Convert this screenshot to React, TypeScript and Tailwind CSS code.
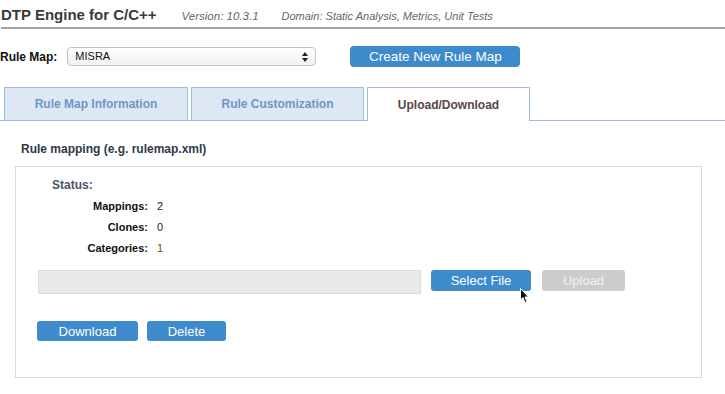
export default function App() {
  const stats = [
    { label: 'Mappings:', value: '2', color: 'text-[#222]' },
    { label: 'Clones:', value: '0', color: 'text-[#222]' },
    { label: 'Categories:', value: '1', color: 'text-[#7a4a14]' },
  ];

  return (
    <div className="w-[725px] h-[394px] bg-white font-['Liberation_Sans',Arial,sans-serif] text-[#333] overflow-hidden relative">
      {/* Header */}
      <div className="flex items-end h-[29px] pb-[5px] border-b-2 border-[#a3a3a3] ml-[1px]">
        <span className="text-[15px] font-bold text-[#3a3a3a] leading-none">DTP Engine for C/C++</span>
        <span className="ml-[25px] text-[11.5px] italic text-[#666] leading-none">Version: 10.3.1</span>
        <span className="ml-[23px] text-[11px] italic text-[#666] leading-none">Domain: Static Analysis, Metrics, Unit Tests</span>
      </div>

      {/* Rule map selector */}
      <div className="flex items-center mt-[17px] h-[21px]">
        <span className="text-[12px] font-bold text-[#111]">Rule Map:</span>
        <div className="ml-[10px] w-[249px] h-[19px] rounded-[4px] border border-[#b9c4d0] bg-gradient-to-b from-white to-[#f1f1f1] flex items-center justify-between px-[7px]">
          <span className="text-[11px] text-[#111]">MISRA</span>
          <svg width="6" height="10" viewBox="0 0 6 10">
            <path d="M0 4 L3 0 L6 4 Z" fill="#222" />
            <path d="M0 6 L3 10 L6 6 Z" fill="#222" />
          </svg>
        </div>
        <button className="ml-[34px] w-[170px] h-[21px] rounded-[4px] bg-[#3d8bcd] text-white text-[13.5px] leading-none">
          Create New Rule Map
        </button>
      </div>

      {/* Tabs */}
      <div className="flex items-end mt-[20px] pl-[4px] gap-[3px] border-b border-[#9dbde0] h-[34px]">
        <div className="w-[184px] h-[33px] bg-[#dde8f4] border border-b-0 border-[#9dbde0] flex items-center justify-center text-[12px] font-bold text-[#6e97c6]">
          Rule Map Information
        </div>
        <div className="w-[173px] h-[33px] bg-[#dde8f4] border border-b-0 border-[#9dbde0] flex items-center justify-center text-[12px] font-bold text-[#6e97c6]">
          Rule Customization
        </div>
        <div className="w-[163px] h-[34px] -mb-px bg-white border border-b-0 border-[#9dbde0] flex items-center justify-center text-[12px] font-bold text-[#5a4545]">
          Upload/Download
        </div>
      </div>

      {/* Section */}
      <div className="mt-[22px] ml-[21px] text-[12px] font-bold text-[#2f3a4a] leading-none">
        Rule mapping (e.g. rulemap.xml)
      </div>

      <div className="ml-[15px] mt-[11px] w-[687px] h-[212px] border border-[#d8d8d8]">
        <div className="ml-[36px] mt-[9px] text-[12px] font-bold text-[#4a5566]">Status:</div>
        <div className="mt-[5px] flex flex-col gap-[6px]">
          {stats.map((s) => (
            <div key={s.label} className="flex items-center h-[15px] text-[11px]">
              <span className="w-[132px] text-right font-bold text-[#111]">{s.label}</span>
              <span className={`ml-[9px] ${s.color}`}>{s.value}</span>
            </div>
          ))}
        </div>

        <div className="flex items-start mt-[14px] ml-[22px]">
          <div className="w-[383px] h-[24px] bg-[#e9e9e9] border border-[#dddddd]" />
          <button className="ml-[10px] w-[100px] h-[21px] rounded-[3px] bg-[#3d8bcd] text-white text-[13px] leading-none">
            Select File
          </button>
          <button className="ml-[11px] w-[83px] h-[21px] rounded-[3px] bg-[#cccccc] text-[#f2f2f2] text-[13px] leading-none">
            Upload
          </button>
        </div>

        <div className="flex mt-[27px] ml-[21px] gap-[9px]">
          <button className="w-[101px] h-[20px] rounded-[3px] bg-[#3d8bcd] text-white text-[13px] leading-none">
            Download
          </button>
          <button className="w-[79px] h-[20px] rounded-[3px] bg-[#3d8bcd] text-white text-[13px] leading-none">
            Delete
          </button>
        </div>
      </div>

      {/* Mouse cursor */}
      <svg className="absolute left-[520px] top-[288px]" width="10" height="16" viewBox="0 0 10 16">
        <path d="M0.5 0.5 L0.5 12 L3 9.5 L5 14.5 L7 13.5 L5 9 L8.5 9 Z" fill="#111" stroke="#fff" strokeWidth="1" />
      </svg>
    </div>
  );
}
